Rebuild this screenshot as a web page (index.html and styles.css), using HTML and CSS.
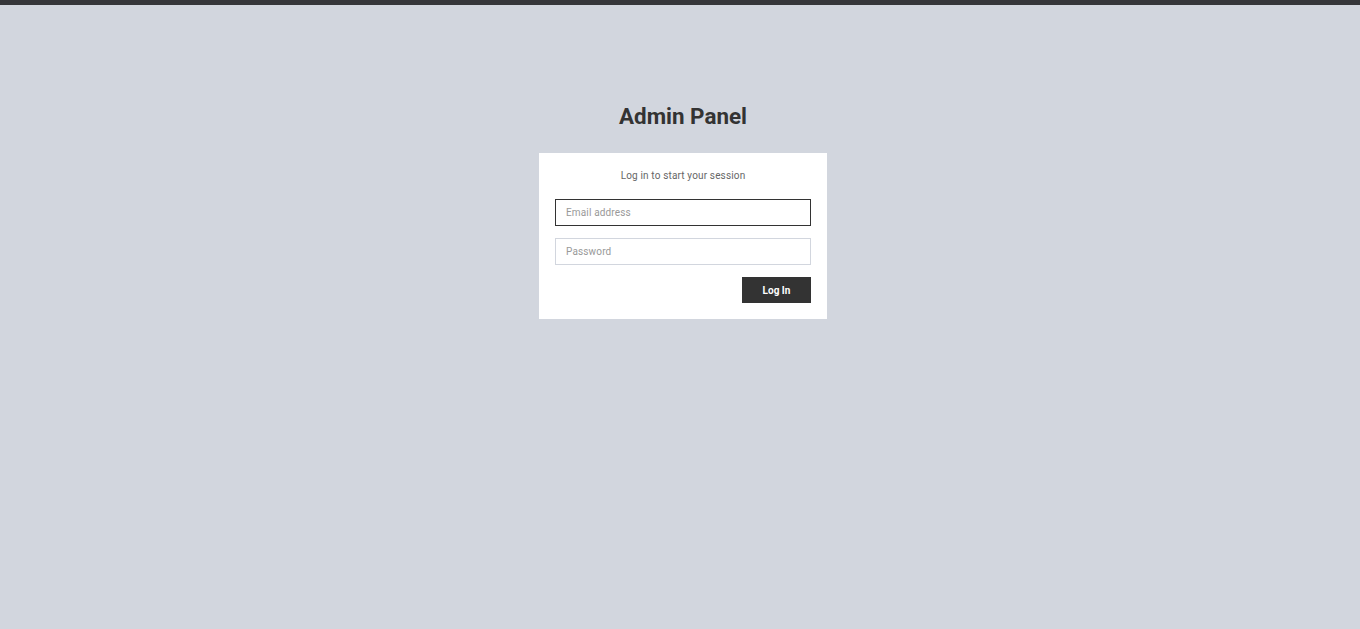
FILE: index.html
```html
<!DOCTYPE html>
<html lang="en">
<head>
<meta charset="utf-8">
<title>Admin Panel</title>
<link rel="stylesheet" href="styles.css">
</head>
<body>
<div class="topbar"></div>
<main class="login">
  <h1 class="login-title">Admin Panel</h1>
  <form class="login-box">
    <p class="login-msg">Log in to start your session</p>
    <input class="field field-active" type="email" placeholder="Email address" autofocus>
    <input class="field" type="password" placeholder="Password">
    <div class="actions">
      <button class="btn" type="button">Log In</button>
    </div>
  </form>
</main>
</body>
</html>
```
FILE: styles.css
```css
html, body {
  margin: 0;
  padding: 0;
  height: 100%;
}
body {
  background: #d2d6de;
  font-family: Roboto, "Liberation Sans", Arial, sans-serif;
  color: #333;
}
.topbar {
  height: 5px;
  background: #36373a;
}
.login {
  display: flex;
  flex-direction: column;
  align-items: center;
  padding: 96px 0 0 6px;
}
.login-title {
  margin: 0 0 22px;
  font-size: 22.4px;
  line-height: 30px;
  font-weight: 700;
  color: #333;
}
.login-box {
  width: 256px;
  background: #fff;
  padding: 16px;
  display: flex;
  flex-direction: column;
}
.login-msg {
  margin: 0 0 16px;
  font-size: 10px;
  line-height: 14px;
  letter-spacing: 0.15px;
  text-align: center;
  color: #666;
}
.field {
  box-sizing: border-box;
  width: 100%;
  height: 27px;
  margin: 0 0 12px;
  padding: 0 10px;
  border: 1px solid #d2d6de;
  border-radius: 0;
  font-family: inherit;
  font-size: 10px;
  letter-spacing: 0.15px;
  color: #333;
  outline: none;
  background: #fff;
}
.field::placeholder {
  color: #999;
}
.field-active {
  border-color: #333;
}
.actions {
  display: flex;
  justify-content: flex-end;
}
.btn {
  width: 69px;
  height: 26px;
  border: 0;
  border-radius: 0;
  background: #333;
  color: #fff;
  font-family: inherit;
  font-size: 10px;
  font-weight: 700;
  cursor: pointer;
}
```
